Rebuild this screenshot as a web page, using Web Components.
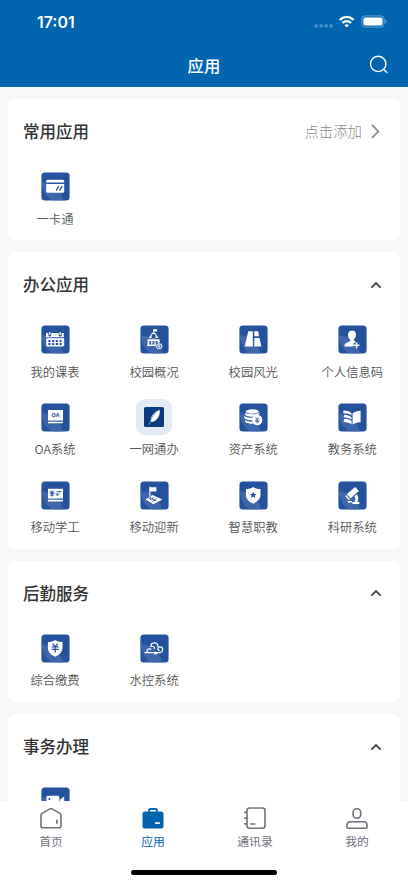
<!DOCTYPE html>
<html lang="zh-CN">
<head>
<meta charset="utf-8">
<title>应用</title>
<style>
body{margin:0;background:#f7f7f7;font-family:"Noto Sans CJK SC",sans-serif;color:#333;overflow:hidden}
</style>
</head>
<body>
<app-shell>
  <status-bar slot="top" time="17:01"></status-bar>
  <nav-bar slot="top">应用</nav-bar>
  <app-card heading="常用应用" more="点击添加">
    <app-item icon="card">一卡通</app-item>
  </app-card>
  <app-card heading="办公应用">
    <app-item icon="calendar">我的课表</app-item>
    <app-item icon="school">校园概况</app-item>
    <app-item icon="road">校园风光</app-item>
    <app-item icon="person">个人信息码</app-item>
    <app-item icon="oa">OA系统</app-item>
    <app-item icon="feather">一网通办</app-item>
    <app-item icon="coins">资产系统</app-item>
    <app-item icon="book">教务系统</app-item>
    <app-item icon="board">移动学工</app-item>
    <app-item icon="flag">移动迎新</app-item>
    <app-item icon="star">智慧职教</app-item>
    <app-item icon="scope">科研系统</app-item>
  </app-card>
  <app-card heading="后勤服务">
    <app-item icon="pay">综合缴费</app-item>
    <app-item icon="cloud">水控系统</app-item>
  </app-card>
  <app-card heading="事务办理">
    <app-item icon="video"></app-item>
  </app-card>
  <tab-bar slot="bottom">
    <tab-item icon="home">首页</tab-item>
    <tab-item icon="apps" active>应用</tab-item>
    <tab-item icon="contacts">通讯录</tab-item>
    <tab-item icon="me">我的</tab-item>
  </tab-bar>
</app-shell>
<script>
const GLYPHS = {
  card:`<path d="M5.2 9.2q0-1.5 1.5-1.5h15q1.5 0 1.5 1.5v1.4h-18z"/><path d="M5.2 12h18v7.2q0 1.5-1.5 1.5h-15q-1.5 0-1.5-1.5z"/><path d="m15.1 18.7 2.6-4.6m.8 4.6 2.6-4.6" stroke="#24529d" stroke-width="1.3"/>`,
  calendar:`<path d="M5.2 8h2.1v2.2q0 1.4 1.5 1.4t1.5-1.4V8h7.4v2.2q0 1.4 1.5 1.4t1.5-1.4V8h2.1v4.3h-18z"/><path d="M8.2 7h1.2v3H8.2zm10.4 0h1.2v3h-1.2z"/><path d="M5.2 13.2h18v7q0 1.4-1.4 1.4H6.6q-1.4 0-1.4-1.4z"/><path d="M7.4 16h13.8M7.4 19h13.8" stroke="#24529d" stroke-width="1.8" stroke-dasharray="2.1 1.6"/>`,
  school:`<path d="M13.1 4h1v5h-1zm1 .2h3v2.2h-3z"/><path fill-rule="evenodd" d="m13.6 7.3 2.2 1.1 1.1 2.4 1.6 2.2H8.7l1.6-2.2 1.1-2.4zM13.6 9a2.2 2.2 0 1 0 0 4.4 2.2 2.2 0 0 0 0-4.4z"/><path d="M7.6 14.3h12v5.9h-2V16h-2v4.2h-1.2V16h-2v4.2h-1.2V16h-2v4.2H7.6z"/><path d="M7.2 19.6h9v1.5h-9z"/><circle cx="19.2" cy="21.3" r="3.3" stroke="#24529d" stroke-width=".6"/><path d="M17.8 20.1h2.8v2.5h-2.8z" fill="none" stroke="#24529d" stroke-width=".8"/>`,
  road:`<path d="M9.2 6.3h4.6v15.2H5.7zM15.3 6.3h3.8l1 5h-4.8zM15.3 12.9h5.2l1.9 8.6h-7.1z"/>`,
  person:`<path d="M14 5.6c2.8 0 4.2 1.9 4 4.4-.1 1.9-1 3.3-2 4.2-.5 1 0 1.5 1.5 2.1v1.6h-1.9v3.7H6.3c.2-3 1.4-3.7 4.1-4.7 1.9-.7 2.3-1.3 1.6-2.5-1.3-1.1-2-2.4-2-4.4 0-2.5 1.3-4.4 4-4.4z"/><path d="M18.6 17.4v5.8m-2.9-2.9h5.8" stroke="#fff" stroke-width="1.6"/>`,
  oa:`<path d="M7 7.1h15v10.4H7zM7 18.7h15v1.5H7z"/><text x="14.5" y="14.4" text-anchor="middle" font-family="Noto Sans,sans-serif" font-size="5.4" font-weight="700" fill="#24529d">OA</text>`,
  coins:`<ellipse cx="13.3" cy="8.5" rx="6.6" ry="2.2"/><path d="M6.3 9.6c2 2.2 11.8 2.2 14 0v1.8c-1.7.2-3.8 1-4.8 2.1-3.9.4-8-.1-9.2-1.5zM5.3 13c1.8 1.5 5.6 2 8.8 1.8l-.8 2.4c-3.2.1-6.6-.5-8-1.9zM6 17.3c1.6 1 4.5 1.5 7.2 1.3l.8 2.2c-3.2 0-6.7-.6-8-2z"/><circle cx="18.2" cy="17" r="5.2"/><path d="m16.5 14.3 1.7 2.1 1.7-2.1m-1.7 2.1v4m-2.1-3.4h4.2m-4.2 1.6h4.2" fill="none" stroke="#24529d" stroke-width=".8"/>`,
  book:`<path d="M14.6 10.2c2-1.6 4.7-2.2 8-2.4v11.5c-3.1.1-5.5.6-8 2.1zM5.3 7.5c4.2.3 6.5.8 8.2 2.8v2.2c-2-1.6-4.4-2.1-8.2-2.3zM6 11.7c3.3.2 5.6.8 7.5 2.5v2.1C11.5 15 9.2 14.4 5.3 14.2c.8-.7 1-1.5.7-2.5zM6 15.8c3.2.1 5.5.7 7.5 2.3v3.3c-2.1-1.8-5-2.4-8.2-2.5.8-.7 1-1.6.7-3.1z"/>`,
  board:`<path d="M7 7.7h15v9.8H7zM7 18.7h15v1.8H7z"/><path d="M8.5 11h5m-4.2 1.5h3.5m-3.5 1.7h3.5m-1.7-4.6v6M15.5 10.7h4.8m-5.8 2.4h4m-2.2 0v2" fill="none" stroke="#24529d" stroke-width="1"/>`,
  flag:`<path d="M9.3 5.8h1.1v11H9.3zm1.1.4h6v4.4h-6z"/><path d="m5.5 18.6 3.1-2.1v1.2h2.4v-2.8l1.4-.8 10 4.4-9 4.8z"/><path d="m10.1 18.8 4-2.4m-1.7 4.1 4-2.5m-4.8-.1 4.2 1.8" fill="none" stroke="#24529d" stroke-width=".9"/>`,
  star:`<path d="M14.2 6c2.2 1.4 4.6 2 7.3 2v5.8c0 4.2-3.2 7.2-7.3 8.9-4.1-1.7-7.3-4.7-7.3-8.9V8c2.7 0 5.1-.6 7.3-2z"/><path fill="#24529d" d="m14.2 10.7 1 2 2.2.3-1.6 1.6.4 2.2-2-1-2 1 .4-2.2L11 13l2.2-.3z"/>`,
  scope:`<path d="M17.1 6 21 10l-8.3 7.3-4-4.1zM8 14l3.9 4-1.1.9L7.1 15z"/><path d="m16.2 15.4 2.5-2.2c2 2.1 2 5.6.6 7.8h2.1v1.9h-7V21h1.9c1.4-1.3 1.6-3.8-.1-5.6z"/><path d="M9.7 20h4.2v1.6H9.7z"/>`,
  pay:`<path d="M14.2 6c2.2 1.4 4.6 2 7.3 2v5.8c0 4.2-3.2 7.2-7.3 8.9-4.1-1.7-7.3-4.7-7.3-8.9V8c2.7 0 5.1-.6 7.3-2z"/><path d="m11.5 9.7 2.7 3 2.7-3m-6.2 3.2h7m-7 2.5h7m-3.5-2.7v5.8" fill="none" stroke="#24529d" stroke-width="1.2"/>`,
  cloud:`<path d="M5 18.7h14.3a3.2 3.2 0 0 0 3.4-3.1c0-1.8-1.3-2.8-2.8-2.8-2.3 0-2.8 3.3-.7 3.5M7.2 18.5c-.8-2.6 1.2-4.2 3.7-3.4m-.1-2.6c.2-4.7 6.8-4.8 7.1-.2M12 12.3c1.8-.2 2.6 1 2.5 2.1M12.5 18.7h1.5l1.5 1.2 1.5-1.2" fill="none" stroke="#fff" stroke-width="1.25" stroke-linecap="round"/>`,
  video:`<path d="M5.5 10.2q0-1.4 1.4-1.4h10q1.4 0 1.4 1.4v9H5.5zM19 12.4l4.2-2.8v9L19 16z"/><circle cx="8.3" cy="12" r="1" fill="#24529d"/>`
};
const FEATHER = `<svg width="36" height="36" viewBox="0 0 36 36"><rect width="36" height="36" rx="9" fill="#e5ebf4"/><rect x="8" y="8" width="20" height="20" rx="1.5" fill="#0a3c82"/><path d="M23.6 11.2c-4.8 1.5-9.2 6.2-8.7 11.2 3.7 1 9-3.6 8.7-11.2zM14.9 22l-2 3.8" fill="#fff" stroke="#fff" stroke-width=".5"/><path d="M13.8 24.2c1-4.2 3-7.4 5.9-10.2" fill="none" stroke="#0a3c82" stroke-width=".4"/></svg>`;
const tile = g => `<svg width="29" height="29" viewBox="0 0 29 29"><rect x=".4" y=".4" width="28.2" height="28.2" rx="3.5" fill="#24529d"/><path d="M.4 10.2c8.5 0 19 5 21.6 18.4H13C5.8 26.5 1.5 19.5.4 10.2z" fill="#4970af" opacity=".7"/><g fill="#fff">${g}</g></svg>`;

function define(name, render){
  customElements.define(name, class extends HTMLElement{
    constructor(){
      super();
      this.attachShadow({mode:'open'}).innerHTML = render(this);
    }
  });
}

define('app-shell', () => `<style>
  :host{display:flex;flex-direction:column;height:883px;overflow:hidden}
  header{flex:none;background:#0064af;height:87px}
  main{flex:1;min-height:0;overflow:hidden;display:flex;flex-direction:column;gap:12px;padding:12px 8px 0}
</style><header><slot name="top"></slot></header><main><slot></slot></main><slot name="bottom"></slot>`);

define('status-bar', el => `<style>
  :host{display:flex;height:45px;align-items:center;justify-content:space-between;padding:0 21px 0 37px;color:#fff;box-sizing:border-box}
  b{font:600 15.9px/20px Inter,sans-serif;padding-top:1px}
  svg{margin-bottom:1px}
</style><b>${el.getAttribute('time')}</b>
<svg width="74" height="16" viewBox="0 0 74 16"><g fill="#fff">
<g opacity=".3"><rect x="1.5" y="10.3" width="3.2" height="3.2" rx="1"/><rect x="6.5" y="10.3" width="3.2" height="3.2" rx="1"/><rect x="11.5" y="10.3" width="3.2" height="3.2" rx="1"/><rect x="16.5" y="10.3" width="3.2" height="3.2" rx="1"/></g>
<path d="m33.7 13.6-2.3-2.4q2.3-1.8 4.6 0z"/></g>
<g fill="none" stroke="#fff" stroke-width="2.2"><path d="M26.7 5.9q7-6 14 0"/><path d="M29.3 8.9q4.4-3.6 8.8 0"/></g>
<rect x="48.9" y="1.9" width="22.2" height="11.2" rx="3.3" fill="none" stroke="#fff" stroke-opacity=".4"/><rect x="50.4" y="3.4" width="19.2" height="8.2" rx="2" fill="#fff"/><path d="M72.2 5.5v4q1.4-.5 1.4-2t-1.4-2z" fill="#fff" opacity=".45"/></svg>`);

define('nav-bar', () => `<style>
  :host{display:grid;grid-template-columns:1fr auto 1fr;align-items:center;height:40px;color:#fff;font-size:16.4px;line-height:24px;font-weight:500}
  svg{justify-self:end;margin-right:18px}
</style><span></span><span><slot></slot></span>
<svg width="22" height="22" viewBox="0 0 22 22" fill="none" stroke="#fff" stroke-width="1.4" stroke-linecap="round"><circle cx="10.2" cy="9.9" r="7.7"/><path d="m15.7 15.4 3.3 3.2"/></svg>`);

define('app-card', el => {
  const more = el.getAttribute('more');
  const right = more
    ? `<span>${more}</span><svg width="9" height="15" viewBox="0 0 9 15" fill="none" stroke="#909090" stroke-width="1.8"><path d="m1 1 6.4 6.4L1 13.9"/></svg>`
    : `<svg class="up" width="12" height="8" viewBox="0 0 12 8" fill="none" stroke="#444" stroke-width="1.8"><path d="m1.4 6.6 4.6-4.6 4.6 4.6"/></svg>`;
  return `<style>
  :host{display:block;flex:none;background:#fff;border-radius:8px;padding-bottom:12.6px}
  .head{display:flex;align-items:center;height:66px;padding:0 20px 2px 15px;box-sizing:border-box}
  h2{margin:0;flex:1;font-size:16.5px;line-height:24px;font-weight:500;color:#333}
  span{font-size:14.4px;line-height:22px;font-weight:300;color:#888;margin-right:9px}
  .up{margin:1px -2px 0 0}
  .grid{display:grid;grid-template-columns:repeat(4,80px);column-gap:19.1px;row-gap:15px;padding-left:7px}
</style><div class="head"><h2>${el.getAttribute('heading')}</h2>${right}</div><div class="grid"><slot></slot></div>`;
});

define('app-item', el => {
  const icon = el.getAttribute('icon');
  return `<style>
  :host{display:flex;flex-direction:column;align-items:center;height:62.7px;padding-top:7px;box-sizing:border-box}
  .icon{display:flex;align-items:center;justify-content:center;width:29px;height:29px;flex:none}
  svg{flex:none;display:block}
  .label{margin-top:8.5px;font-size:12.3px;line-height:18px;white-space:nowrap;color:#555;font-weight:350}
</style><div class="icon">${icon === 'feather' ? FEATHER : tile(GLYPHS[icon])}</div><div class="label"><slot></slot></div>`;
});

define('tab-bar', () => `<style>
  :host{display:flex;flex-direction:column;flex:none;height:82px;background:#fff;align-items:center}
  nav{display:flex;align-self:stretch;height:69px}
  i{width:146px;height:5px;border-radius:3px;background:#000}
</style><nav><slot></slot></nav><i></i>`);

const TABS = {
  home:`<path d="M2 8.2q0-1.2 1-1.8l8-4.5q1-.6 2 0l8 4.5q1 .6 1 1.8v10.6q0 2-2 2H4q-2 0-2-2z" fill="none" stroke="currentColor" stroke-width="1.6"/><path d="M17.9 12.8v4" stroke="currentColor" stroke-width="1.7"/>`,
  apps:`<path d="M8 5V3.3q0-1.3 1.3-1.3h5.4Q16 2 16 3.3V5" fill="none" stroke="currentColor" stroke-width="1.8"/><rect x="1.5" y="4.5" width="21" height="17" rx="2.6" fill="currentColor"/><path d="M14 16.1h4.8" stroke="#fff" stroke-width="1.7"/>`,
  contacts:`<rect x="4" y="1" width="18" height="20.3" rx="2.5" fill="none" stroke="currentColor" stroke-width="1.6"/><path d="M1.2 5.3H4M1.2 11.1H4M1.2 16.9H4" stroke="currentColor" stroke-width="1.8"/><path d="M7.2 17h5.2" stroke="currentColor" stroke-width="1.5"/>`,
  me:`<rect x="8.1" y="1.8" width="7.6" height="9.5" rx="3.7" fill="none" stroke="currentColor" stroke-width="1.6"/><path d="M5 14.8h14q3 .2 3 3.4v2q0 1-1 1H3q-1 0-1-1v-2q0-3.2 3-3.4z" fill="none" stroke="currentColor" stroke-width="1.6"/>`
};
define('tab-item', el => `<style>
  :host{display:flex;flex:1;flex-direction:column;align-items:center;padding-top:6px;color:#71717b;font-size:11.8px;line-height:18px}
  :host([active]){color:#0064af}
  svg{display:block;margin-bottom:2px}
</style><svg width="24" height="23" viewBox="0 0 24 23">${TABS[el.getAttribute('icon')]}</svg><span><slot></slot></span>`);
</script>
</body>
</html>
